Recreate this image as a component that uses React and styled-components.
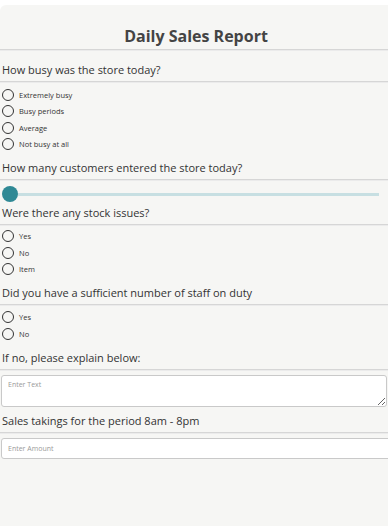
import React from "react";
import styled, { createGlobalStyle } from "styled-components";

const Global = createGlobalStyle`
  html, body { margin: 0; padding: 0; background: #ffffff; overflow: hidden; }
  body { font-family: "Open Sans", "Noto Sans", sans-serif; }
  * { box-sizing: border-box; }
`;

const Card = styled.div`
  margin-top: 5px;
  width: 392px;
  min-height: 521px;
  background: #f6f6f4;
  border-top-left-radius: 6px;
  display: flex;
  flex-direction: column;
`;

const Title = styled.h1`
  margin: 0;
  padding-top: 18px;
  height: 44px;
  line-height: 26px;
  text-align: center;
  font-size: 16px;
  font-weight: 700;
  color: #444444;
`;

const Divider = styled.div`
  height: 2px;
  flex-shrink: 0;
  border-top: 1px solid #d6d6d6;
  border-bottom: 1px solid #ebebeb;
`;

const Section = styled.section`
  display: flex;
  flex-direction: column;
  margin-top: ${(p) => p.$gap ?? 5}px;
`;

const Question = styled.div`
  height: 20px;
  line-height: 20px;
  margin-bottom: 1px;
  padding-left: 2px;
  font-size: 11px;
  color: #333333;
  white-space: nowrap;
`;

const Options = styled.div`
  display: flex;
  flex-direction: column;
  padding-top: ${(p) => p.$pad ?? 3.5}px;
`;

const Option = styled.label`
  display: flex;
  align-items: center;
  gap: 5px;
  height: 16.5px;
  padding-left: 2px;
  font-size: 7.5px;
  font-weight: 500;
  color: #333333;
`;

const Circle = styled.span`
  width: 12px;
  height: 12px;
  border-radius: 50%;
  border: 1px solid #333333;
  background: transparent;
  flex-shrink: 0;
`;

const Slider = styled.div`
  margin-top: 5px;
  height: 16px;
  display: flex;
  align-items: center;
  padding-left: 2px;
  width: 379px;
`;

const Thumb = styled.span`
  width: 16px;
  height: 16px;
  border-radius: 50%;
  background: #2f8995;
  flex-shrink: 0;
`;

const Track = styled.span`
  flex: 1;
  height: 3px;
  background: #c7dfe2;
`;

const TextArea = styled.textarea`
  display: block;
  margin: 4px 0 0 1px;
  width: 386px;
  height: 32px;
  border: 1px solid #c9c9c9;
  border-radius: 3px;
  background: #ffffff;
  padding: 4px 6px;
  font-family: "Open Sans", sans-serif;
  font-size: 7px;
  color: #333;
  resize: vertical;
  &::placeholder { color: #9a9a9a; }
`;

const Input = styled.input`
  display: block;
  margin: 4px 0 0 1px;
  width: 400px;
  height: 21px;
  border: 1px solid #c9c9c9;
  border-radius: 3px;
  background: #ffffff;
  padding: 0 6px;
  font-family: "Open Sans", sans-serif;
  font-size: 7px;
  color: #333;
  &::placeholder { color: #9a9a9a; }
`;

function RadioGroup({ items, pad }) {
  return (
    <Options $pad={pad}>
      {items.map((t) => (
        <Option key={t}>
          <Circle />
          {t}
        </Option>
      ))}
    </Options>
  );
}

export default function App() {
  return (
    <>
      <Global />
      <Card>
        <Title>Daily Sales Report</Title>
        <Divider />
        <Section $gap={9}>
          <Question>How busy was the store today?</Question>
          <Divider />
          <RadioGroup items={["Extremely busy", "Busy periods", "Average", "Not busy at all"]} />
        </Section>
        <Section $gap={5.5}>
          <Question>How many customers entered the store today?</Question>
          <Divider />
          <Slider>
            <Thumb />
            <Track />
          </Slider>
        </Section>
        <Section $gap={0.5}>
          <Question>Were there any stock issues?</Question>
          <Divider />
          <RadioGroup items={["Yes", "No", "Item"]} pad={2.5} />
        </Section>
        <Section $gap={5.5}>
          <Question>Did you have a sufficient number of staff on duty</Question>
          <Divider />
          <RadioGroup items={["Yes", "No"]} pad={3} />
        </Section>
        <Section $gap={5.5}>
          <Question>If no, please explain below:</Question>
          <Divider />
          <TextArea placeholder="Enter Text" />
        </Section>
        <Section $gap={4.5}>
          <Question>Sales takings for the period 8am - 8pm</Question>
          <Divider />
          <Input placeholder="Enter Amount" />
        </Section>
      </Card>
    </>
  );
}
